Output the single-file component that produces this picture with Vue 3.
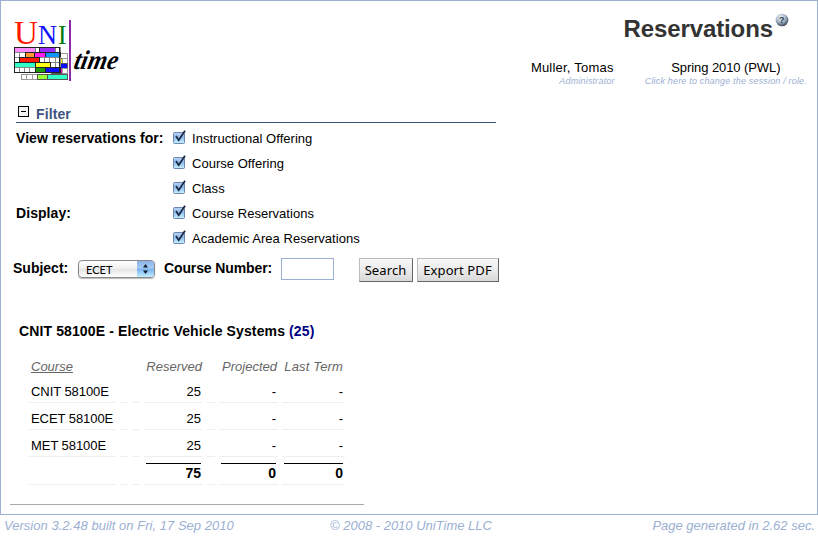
<script setup>
const filters = [
  { label: 'View reservations for:', text: 'Instructional Offering' },
  { label: '', text: 'Course Offering' },
  { label: '', text: 'Class' },
  { label: 'Display:', text: 'Course Reservations' },
  { label: '', text: 'Academic Area Reservations' },
]
const courses = ['CNIT 58100E', 'ECET 58100E', 'MET 58100E']
const blocks = [
  [14, 47, 21, '#ff8cff'], [35, 47, 4, '#fff'], [39, 47, 16, '#9a2cff'], [55, 47, 5, '#fff'],
  [14, 52, 5, '#fff'], [19, 52, 6, '#fff'], [25, 52, 9, '#ff9833'], [34, 52, 11, '#ff1cf5'], [45, 52, 15, '#0d96ff'],
  [14, 57, 5, '#fff'], [39, 57, 5, '#fff'], [44, 57, 5, '#fff'], [49, 57, 6, '#fff'], [55, 57, 5, '#fff'], [19, 57, 20, '#ff1a00'],
  [50, 62, 5, '#fff'], [55, 62, 5, '#fff'], [14, 62, 21, '#2fffc9'], [35, 62, 15, '#ffff19'],
  [14, 67, 5, '#fff'], [19, 67, 5, '#fff'], [24, 67, 5, '#fff'], [29, 67, 6, '#fff'], [35, 67, 10, '#1f9a00'], [45, 67, 15, '#0c0cff'],
]
const backBlocks = [
  [60, 53, 7, '#fff'], [60, 58, 2, '#ff0'], [62, 58, 5, '#fff'], [60, 63, 7, '#0c0cff'], [51, 68, 11, '#f0d'], [62, 68, 5, '#fff'],
  [21, 74, 5, '#fff'], [26, 74, 6, '#fff'], [32, 74, 5, '#fff'], [37, 74, 10, '#96ff35'], [47, 74, 20, '#2fffc9'],
]
</script>

<template>
  <div class="page">
    <main class="frame">
      <header class="header">
        <svg class="logo" width="110" height="68" viewBox="12 15 110 68">
          <text x="14" y="44" class="uni" font-size="34" fill="#ff1a00" textLength="24" lengthAdjust="spacingAndGlyphs">U</text>
          <text x="38" y="44" class="uni" font-size="27" fill="#1010ff" textLength="19" lengthAdjust="spacingAndGlyphs">N</text>
          <text x="58" y="44" class="uni" font-size="27" fill="#007b10" textLength="8.5" lengthAdjust="spacingAndGlyphs">I</text>
          <g stroke-width="1">
            <rect v-for="(b, i) in backBlocks" :key="'b' + i" :x="b[0] + .5" :y="b[1] + .5" :width="b[2]" height="5" :fill="b[3]" :stroke="b[3] === '#fff' ? '#999' : '#555'" />
            <rect v-for="(b, i) in blocks" :key="i" :x="b[0] + .5" :y="b[1] + .5" :width="b[2]" height="5" :fill="b[3]" :stroke="b[3] === '#fff' ? '#888' : '#222'" />
            <rect x="14.5" y="47.5" width="45" height="25" fill="none" stroke="#222" />
          </g>
          <path d="M70 20V81" stroke="#8d2aa8" stroke-width="2" />
          <text x="73" y="69.5" transform="translate(14.5 0) skewX(-12)" class="time" font-size="27" textLength="44" lengthAdjust="spacingAndGlyphs">time</text>
        </svg>
        <div class="heading">
          <h1><span>Reservations</span>
            <svg width="14" height="14" viewBox="0 0 14 14">
              <defs><radialGradient id="ball" cx=".4" cy=".3" r=".7"><stop offset="0" stop-color="#e8f0fa" /><stop offset=".55" stop-color="#a7b6c8" /><stop offset="1" stop-color="#3d4958" /></radialGradient></defs>
              <circle cx="7" cy="7" r="6.3" fill="url(#ball)" />
              <text x="6.8" y="10" text-anchor="middle" font-family="Liberation Sans" font-size="9" font-weight="bold" fill="#27384e">?</text>
            </svg>
          </h1>
          <div class="session">
            <div class="who"><p>Muller, Tomas</p><small>Administrator</small></div>
            <div class="term"><p>Spring 2010 (PWL)</p><small>Click here to change the session / role.</small></div>
          </div>
        </div>
      </header>

      <section class="filter">
        <h2>
          <svg width="11" height="11" viewBox="0 0 11 11"><rect x=".5" y=".5" width="10" height="10" fill="#f4f4f4" stroke="#000" /><path d="M3 5.5H8" stroke="#000" /></svg>
          <span>Filter</span>
        </h2>
        <div v-for="f in filters" :key="f.text" class="option">
          <b>{{ f.label }}</b>
          <svg width="14" height="15" viewBox="0 0 14 15">
            <defs><linearGradient id="box" x2="0" y2="1"><stop offset="0" stop-color="#b9d2f0" /><stop offset=".45" stop-color="#8dbbed" /><stop offset="1" stop-color="#c9f4ff" /></linearGradient></defs>
            <rect x=".5" y="2.5" width="11" height="11" rx="1" fill="url(#box)" stroke="#6f87b0" />
            <path d="M3 6L5.7 10.2L12 .8" fill="none" stroke="#1c2a44" stroke-width="1.8" />
          </svg>
          <span>{{ f.text }}</span>
        </div>
      </section>

      <section class="search">
        <b class="subject">Subject:</b>
        <div class="select"><span>ECET</span>
          <i><svg width="17" height="16" viewBox="0 0 17 16"><path d="M6 6.5L8.5 3L11 6.5ZM6 9.5L8.5 13L11 9.5Z" fill="#111b2e" /></svg></i>
        </div>
        <b class="number">Course Number:</b>
        <input type="text" aria-label="Course Number">
        <button class="go">Search</button>
        <button class="pdf">Export PDF</button>
      </section>

      <section class="results">
        <h3>CNIT 58100E - Electric Vehicle Systems <span>(25)</span></h3>
        <div class="row head"><u>Course</u><i></i><i></i><span>Reserved</span><i></i><span>Projected</span><span class="last">Last Term</span></div>
        <div v-for="c in courses" :key="c" class="row">
          <span class="course">{{ c }}</span><i></i><i></i><span>25</span><i></i><span>-</span><span>-</span>
        </div>
        <div class="row total"><span></span><i></i><i></i><span><b>75</b></span><i></i><span><b>0</b></span><span><b>0</b></span></div>
        <hr>
      </section>
    </main>
    <footer><span class="v">Version 3.2.48 built on Fri, 17 Sep 2010</span><span class="c">© 2008 - 2010 UniTime LLC</span><span class="g">Page generated in 2.62 sec.</span></footer>
  </div>
</template>

<style>
body { background: #fff; }
</style>

<style scoped>
* { box-sizing: border-box; margin: 0; }
.page { width: 818px; height: 538px; overflow: hidden; font: 13px/16px "Liberation Sans", Arial, sans-serif; color: #000; white-space: nowrap; }
.frame { height: 515px; border: 1px solid #9bafd3; }
svg { display: block; flex: none; }
.header { display: flex; justify-content: space-between; height: 104px; padding: 0 10px 0 11px; }
.logo { margin-top: 14px; overflow: visible; }
.uni { font-family: "Liberation Serif", serif; }
.time { font-family: "Liberation Serif", serif; font-weight: bold; font-style: italic; }
.heading { padding-top: 11px; }
h1 { display: flex; justify-content: flex-end; gap: 2px; height: 47px; padding-right: 18px; font-size: 24px; line-height: 33px; color: #333; letter-spacing: -.1px; }
h1 svg { margin-top: 1px; }
.session { display: flex; justify-content: flex-end; gap: 30px; }
.session p { line-height: 17px; }
.session small { display: block; font-size: 9px; line-height: 10px; font-style: italic; color: #9bafd3; letter-spacing: .18px; }
.who { text-align: right; }
.who p { padding-right: 1px; letter-spacing: .22px; }
.term { text-align: center; }
.term p { letter-spacing: -.08px; }
.filter { padding-left: 15px; }
h2 { display: flex; gap: 7px; width: 480px; height: 18px; border-bottom: 1px solid #3b5278; color: #405480; font-size: 14px; line-height: 17px; letter-spacing: .1px; }
h2 svg { margin: 1px 0 0 2px; }
h2 span { padding-top: 1px; }
.option { display: flex; align-items: center; height: 25px; padding-top: 6px; }
.option b { width: 157px; margin-top: -2px; font-size: 14px; letter-spacing: .07px; }
.option svg { width: 14px; margin-top: -3px; margin-right: 5px; }
.option span { letter-spacing: .03px; }
.search { display: flex; height: 45px; padding: 10px 0 0 12px; }
.search b { padding-top: 2px; font-size: 14px; }
.subject { width: 65px; }
.select { display: flex; justify-content: space-between; width: 77px; height: 18px; margin: 2px 9px 0 0; border: 1px solid #888; border-radius: 4px; background: linear-gradient(#fff, #eee 50%, #e4e4e4 52%, #fff); overflow: hidden; box-shadow: 0 1px 1px #bbb; }
.select span { padding: 0 0 0 7px; font: 11px/17px Lato, sans-serif; }
.select i { width: 17px; background: linear-gradient(#8db4e8, #a7cbf2 45%, #78b1ed 50%, #c3efff); }
.search .number { width: 117px; letter-spacing: -.12px; }
input { width: 53px; height: 22px; padding: 0; border: 1px solid #9bafd3; }
button { height: 24px; padding: 0 1px 0 0; border: 1px solid #bbb; border-right-color: #666; border-bottom-color: #666; background: linear-gradient(#f8f8f8, #e9e9e9 55%, #d9d9d9); color: #000; font: 13px/22px "Noto Sans", sans-serif; letter-spacing: .1px; }
.go { width: 54px; margin: 0 4px 0 25px; }
.pdf { width: 82px; }
.results { padding: 31px 0 0 9px; }
h3 { height: 34px; padding-left: 9px; font-size: 14px; line-height: 14px; letter-spacing: .12px; }
h3 span { color: #000080; }
.row { display: grid; grid-template-columns: 87px 8px 8px 59px 8px 59px 63px; grid-template-rows: 100%; column-gap: 4px; height: 27px; padding-left: 19px; line-height: 31px; text-align: right; }
.row > * { border-bottom: 1px solid #eee; padding-right: 2px; }
.row .course { text-align: left; padding-left: 2px; letter-spacing: -.06px; }
.head { height: 18px; line-height: 18px; font-style: italic; color: #666; }
.head > * { border: 0; padding-right: 1px; }
.head .last { padding-right: 2px; letter-spacing: .15px; }
.head u { text-align: left; padding-left: 2px; }
.total { height: 28px; }
.row.total > * { padding: 6px 2px 0; }
.total b { display: block; border-top: 1px solid #000; font-size: 14px; line-height: 19px; }
hr { width: 354px; margin-top: 19px; border: 0; border-top: 1px solid #aaa; }
footer { display: flex; padding: 2px 3px 0 4px; color: #9bafd3; font-style: italic; line-height: 17px; }
.v { width: 326px; letter-spacing: .03px; }
.c { flex: 1; }
</style>
